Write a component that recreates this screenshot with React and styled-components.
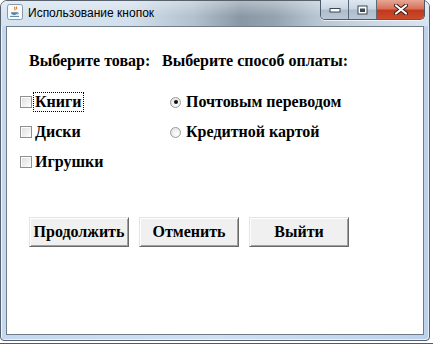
import React from 'react';
import styled, { createGlobalStyle } from 'styled-components';

const GlobalStyle = createGlobalStyle`
    html, body {
        margin: 0;
        padding: 0;
        background: #ffffff;
    }
    #root {
        width: 433px;
        height: 344px;
        overflow: hidden;
    }
`;

const Screen = styled.div`
    width: 433px;
    height: 344px;
    background: #ffffff;
    border-bottom: 1px solid #5a5a5a;
    box-sizing: border-box;
`;

const Window = styled.div`
    width: 430px;
    height: 341px;
    box-sizing: border-box;
    display: flex;
    flex-direction: column;
    border: 1px solid #56616d;
    border-radius: 7px 7px 4px 4px;
    background: linear-gradient(90deg, #c4d8ef 0%, #cfe0f3 50%, #bcd2ec 100%);
    box-shadow: inset 1px 1px 0 rgba(255, 255, 255, 0.8), inset -1px -1px 0 rgba(255, 255, 255, 0.6);
`;

const TitleBar = styled.div`
    height: 25px;
    display: flex;
    align-items: flex-start;
    padding-left: 6px;
    border-radius: 6px 6px 0 0;
    background:
        linear-gradient(180deg, rgba(255, 255, 255, 0.35) 0%, rgba(255, 255, 255, 0) 60%),
        linear-gradient(90deg, #d6e3f0 0%, #d2dfec 30%, #b3c1cf 45%, #8a98a6 56%, #95a3b1 64%, #b8c6d4 74%, #cdd9e6 88%, #d9e4ef 100%);
`;

const AppIcon = styled.svg`
    width: 16px;
    height: 16px;
    margin-top: 3px;
    flex-shrink: 0;
`;

const TitleText = styled.span`
    margin-left: 5px;
    margin-top: 4px;
    font-family: 'Liberation Sans', Arial, sans-serif;
    font-size: 12px;
    line-height: 16px;
    color: #000000;
`;

const Controls = styled.div`
    margin-left: auto;
    margin-right: 4px;
    margin-top: -1px;
    display: flex;
    height: 19px;
    border: 1px solid #4e5a67;
    border-top: none;
    border-radius: 0 0 5px 5px;
    overflow: hidden;
    box-shadow: 0 1px 0 rgba(255, 255, 255, 0.7);
`;

const ControlButton = styled.div`
    width: ${(p) => p.$w}px;
    height: 19px;
    display: flex;
    align-items: center;
    justify-content: center;
    border-left: ${(p) => (p.$first ? 'none' : '1px solid #5d6975')};
    background: ${(p) =>
        p.$close
            ? 'linear-gradient(180deg, #e7a797 0%, #d7725a 45%, #c2391c 55%, #cc4b2d 100%)'
            : 'linear-gradient(180deg, #dfe8f1 0%, #c9d6e3 45%, #aebdcc 55%, #b9c8d7 100%)'};
`;

const Client = styled.div`
    flex: 1;
    margin: 0 5px 5px 5px;
    background: #ffffff;
    border: 1px solid #6f7b87;
    padding: 25px 0 0 13px;
    font-family: 'Liberation Serif', 'Times New Roman', serif;
    font-weight: bold;
    font-size: 16px;
    line-height: 18px;
    color: #000000;
`;

const Columns = styled.div`
    display: flex;
`;

const Column = styled.div`
    width: ${(p) => p.$w || 'auto'};
    display: flex;
    flex-direction: column;
`;

const Heading = styled.div`
    padding-left: ${(p) => p.$indent || 0}px;
    height: 18px;
    white-space: nowrap;
`;

const Options = styled.div`
    margin-top: 23px;
    padding-left: ${(p) => p.$indent || 0}px;
    display: flex;
    flex-direction: column;
    gap: 12px;
`;

const Option = styled.div`
    height: 18px;
    display: flex;
    align-items: center;
    white-space: nowrap;
`;

const Box = styled.span`
    width: 12px;
    height: 12px;
    box-sizing: border-box;
    border: 1px solid #8e8f8f;
    background: linear-gradient(135deg, #dcdcdc 0%, #f4f4f4 70%, #ffffff 100%);
    box-shadow: inset 1px 1px 0 #ffffff;
    margin-right: 2px;
    flex-shrink: 0;
`;

const Round = styled.span`
    position: relative;
    width: 11px;
    height: 11px;
    box-sizing: border-box;
    border: 1px solid #9a9a9a;
    border-radius: 50%;
    background: radial-gradient(circle at 65% 65%, #ffffff 0%, #ebebeb 60%, #d8d8d8 100%);
    margin-right: 5px;
    flex-shrink: 0;

    &::after {
        content: '';
        display: ${(p) => (p.$on ? 'block' : 'none')};
        position: absolute;
        left: 2.5px;
        top: 2.5px;
        width: 4px;
        height: 4px;
        border-radius: 50%;
        background: #111111;
    }
`;

const Label = styled.span`
    padding: 0 1px;
    outline: ${(p) => (p.$focus ? '1px dotted #000000' : 'none')};
    outline-offset: 0;
`;

const ButtonRow = styled.div`
    display: flex;
    gap: 10px;
    margin-top: 46px;
    padding-left: 9px;
`;

const Button = styled.div`
    width: 100px;
    height: 30px;
    box-sizing: border-box;
    display: flex;
    align-items: center;
    justify-content: center;
    background: #f0f0f0;
    border: 1px solid;
    border-color: #e3e3e3 #696969 #696969 #e3e3e3;
    box-shadow: inset 1px 1px 0 #ffffff, inset -1px -1px 0 #a0a0a0;
    white-space: nowrap;
`;

const JavaIcon = () => (
    <AppIcon viewBox="0 0 16 16">
        <rect x="0.5" y="0.5" width="15" height="15" rx="2" fill="#f7f9fb" stroke="#8a98a8" />
        <path d="M8 3c-1.5 1.2 1 1.8-0.3 3.4M9.6 2.6c-1 1 0.7 1.4-0.2 2.6" stroke="#e2761b" strokeWidth="1.1" fill="none" />
        <path d="M4 8.2h6.4c0 1.8-1.4 2.8-3.2 2.8S4 10 4 8.2z" fill="#5382a1" />
        <path d="M10.2 8.6c1.6-0.2 1.6 1.6 0 1.5" stroke="#5382a1" strokeWidth="0.9" fill="none" />
        <path d="M3 12.4h9" stroke="#5382a1" strokeWidth="1" />
    </AppIcon>
);

const MinGlyph = () => (
    <svg width="12" height="6" viewBox="0 0 12 6">
        <rect x="1" y="1.5" width="10" height="3.5" fill="#ffffff" stroke="#3a4652" strokeWidth="1" />
    </svg>
);

const MaxGlyph = () => (
    <svg width="11" height="10" viewBox="0 0 11 10">
        <rect x="0.5" y="0.5" width="10" height="9" fill="#3a4652" />
        <rect x="1.5" y="1.5" width="8" height="7" fill="#ffffff" />
        <rect x="3" y="3.5" width="5" height="3.5" fill="#3a4652" />
    </svg>
);

const CloseGlyph = () => (
    <svg width="14" height="11" viewBox="0 0 14 11">
        <path d="M2 1.5l10 8M12 1.5l-10 8" stroke="#3b1a12" strokeWidth="4" strokeLinecap="round" />
        <path d="M2 1.5l10 8M12 1.5l-10 8" stroke="#ffffff" strokeWidth="2.2" strokeLinecap="round" />
    </svg>
);

const products = ['Книги', 'Диски', 'Игрушки'];
const payments = [
    { label: 'Почтовым переводом', on: true },
    { label: 'Кредитной картой', on: false },
];
const actions = ['Продолжить', 'Отменить', 'Выйти'];

function App() {
    return (
        <>
            <GlobalStyle />
            <Screen>
                <Window>
                    <TitleBar>
                        <JavaIcon />
                        <TitleText>Использование кнопок</TitleText>
                        <Controls>
                            <ControlButton $w={27} $first>
                                <MinGlyph />
                            </ControlButton>
                            <ControlButton $w={27}>
                                <MaxGlyph />
                            </ControlButton>
                            <ControlButton $w={47} $close>
                                <CloseGlyph />
                            </ControlButton>
                        </Controls>
                    </TitleBar>
                    <Client>
                        <Columns>
                            <Column $w="142px">
                                <Heading $indent={9}>Выберите товар:</Heading>
                                <Options>
                                    {products.map((p, i) => (
                                        <Option key={p}>
                                            <Box />
                                            <Label $focus={i === 0}>{p}</Label>
                                        </Option>
                                    ))}
                                </Options>
                            </Column>
                            <Column>
                                <Heading>Выберите способ оплаты:</Heading>
                                <Options $indent={8}>
                                    {payments.map((p) => (
                                        <Option key={p.label}>
                                            <Round $on={p.on} />
                                            <span>{p.label}</span>
                                        </Option>
                                    ))}
                                </Options>
                            </Column>
                        </Columns>
                        <ButtonRow>
                            {actions.map((a) => (
                                <Button key={a}>{a}</Button>
                            ))}
                        </ButtonRow>
                    </Client>
                </Window>
            </Screen>
        </>
    );
}

export default App;
